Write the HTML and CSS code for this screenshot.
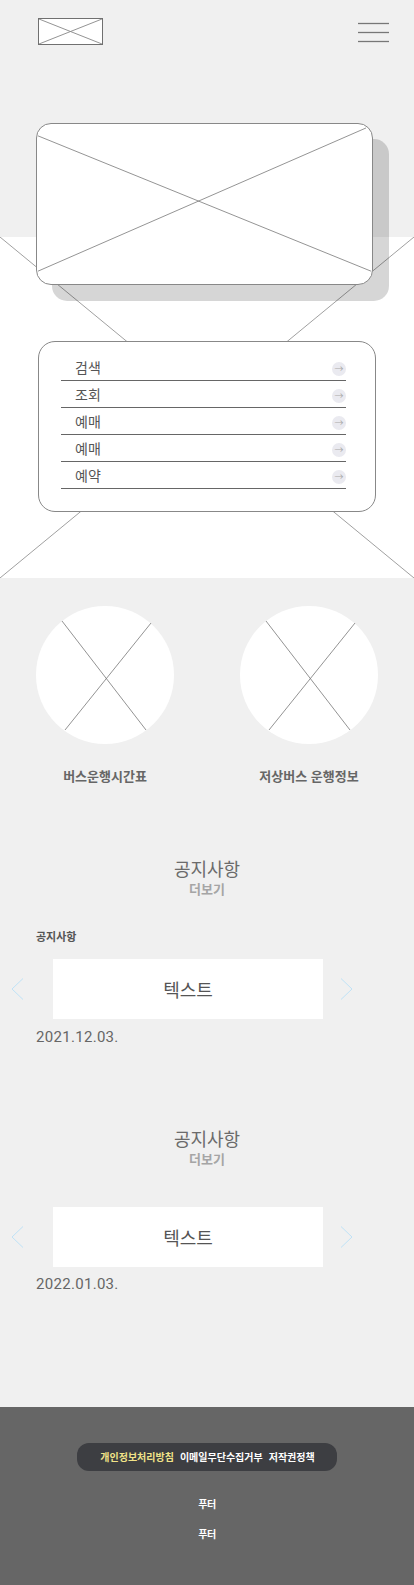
FILE: index.html
```html
<!DOCTYPE html>
<html lang="ko">

<head>
    <meta charset="utf-8">
    <meta name="viewport" content="width=device-width, initial-scale=1.0">
    <title>버스 예매</title>
    <link rel="stylesheet" href="styles.css">
</head>

<body>

    <header>
        <a class="logo" href="#">
            <svg viewBox="0 0 66 28" preserveAspectRatio="none">
                <line x1="0" y1="0" x2="66" y2="28" />
                <line x1="66" y1="0" x2="0" y2="28" />
            </svg>
        </a>
        <button class="menu-btn" aria-label="메뉴">
            <svg width="31" height="28" viewBox="0 0 31 28">
                <line x1="0" y1="5.5" x2="31" y2="5.5" />
                <line x1="0" y1="14.5" x2="31" y2="14.5" />
                <line x1="0" y1="23.5" x2="31" y2="23.5" />
            </svg>
        </button>
    </header>

    <section class="visual">
        <svg class="visual-x" viewBox="0 0 414 341" preserveAspectRatio="none">
            <line x1="0" y1="0" x2="414" y2="341" />
            <line x1="414" y1="0" x2="0" y2="341" />
        </svg>

        <div class="hero">
            <svg viewBox="0 0 337 162" preserveAspectRatio="none">
                <line x1="1" y1="12" x2="336" y2="149" />
                <line x1="331" y1="4" x2="1" y2="149" />
            </svg>
        </div>

        <nav class="quick-menu">
            <a href="#" class="row">검색<span class="go"></span></a>
            <a href="#" class="row">조회<span class="go"></span></a>
            <a href="#" class="row">예매<span class="go"></span></a>
            <a href="#" class="row">예매<span class="go"></span></a>
            <a href="#" class="row">예약<span class="go"></span></a>
        </nav>
    </section>

    <section class="links">
        <a href="#" class="link">
            <span class="circle">
                <svg viewBox="0 0 138 138">
                    <line x1="26" y1="15" x2="110" y2="124" />
                    <line x1="115" y1="17" x2="29" y2="124" />
                </svg>
            </span>
            <span class="link-name">버스운행시간표</span>
        </a>
        <a href="#" class="link">
            <span class="circle">
                <svg viewBox="0 0 138 138">
                    <line x1="26" y1="15" x2="110" y2="124" />
                    <line x1="115" y1="17" x2="29" y2="124" />
                </svg>
            </span>
            <span class="link-name">저상버스 운행정보</span>
        </a>
    </section>

    <section class="notice first">
        <h2>공지사항</h2>
        <a href="#" class="more">더보기</a>
        <p class="notice-label">공지사항</p>
        <div class="slider">
            <button class="arrow prev" aria-label="이전">
                <svg width="13" height="22" viewBox="0 0 13 22"><polyline points="12,0.5 1,11 12,21.5" /></svg>
            </button>
            <div class="slide">텍스트</div>
            <button class="arrow next" aria-label="다음">
                <svg width="13" height="22" viewBox="0 0 13 22"><polyline points="1,0.5 12,11 1,21.5" /></svg>
            </button>
        </div>
        <p class="date">2021.12.03.</p>
    </section>

    <section class="notice second">
        <h2>공지사항</h2>
        <a href="#" class="more">더보기</a>
        <div class="slider">
            <button class="arrow prev" aria-label="이전">
                <svg width="13" height="22" viewBox="0 0 13 22"><polyline points="12,0.5 1,11 12,21.5" /></svg>
            </button>
            <div class="slide">텍스트</div>
            <button class="arrow next" aria-label="다음">
                <svg width="13" height="22" viewBox="0 0 13 22"><polyline points="1,0.5 12,11 1,21.5" /></svg>
            </button>
        </div>
        <p class="date">2022.01.03.</p>
    </section>

    <footer>
        <div class="policy">
            <a href="#" class="privacy">개인정보처리방침</a>
            <a href="#">이메일무단수집거부</a>
            <a href="#">저작권정책</a>
        </div>
        <p>푸터</p>
        <p>푸터</p>
    </footer>

</body></html>
```

FILE: styles.css
```css
body {
    margin: 0;
    background-color: #f0f0f0;
    font-family: "Noto Sans CJK KR", "Noto Sans", sans-serif;
    color: #555;
}

a {
    text-decoration: none;
    color: inherit;
}

button {
    border: none;
    background: none;
    padding: 0;
}

header {
    display: flex;
    justify-content: space-between;
    align-items: flex-start;
    padding: 18px 25px 0 38px;
    height: 28px;
}

.logo {
    display: block;
    width: 63px;
    height: 25px;
    background-color: #fff;
    border: 1.5px solid #707070;
}

.logo svg {
    display: block;
    width: 100%;
    height: 100%;
    stroke: #8a8a8a;
    stroke-width: 1;
}

.menu-btn svg {
    display: block;
    stroke: #777;
    stroke-width: 1.3;
}

/* main visual */
.visual {
    position: relative;
    margin-top: 191px;
    height: 341px;
    background-color: #fff;
}

.visual-x {
    position: absolute;
    top: 0;
    left: 0;
    width: 100%;
    height: 100%;
    stroke: #777;
    stroke-width: 0.7;
}

.hero {
    position: relative;
    top: -114px;
    margin: 0 41px 0 36px;
    height: 160px;
    background-color: #fff;
    border: 1px solid #888;
    border-radius: 15px;
    box-shadow: 16px 16px 0 rgba(0, 0, 0, .16);
}

.hero svg {
    display: block;
    width: 100%;
    height: 100%;
    stroke: #777;
    stroke-width: 0.8;
}

.quick-menu {
    position: relative;
    margin: -58px 38px 0 38px;
    padding: 12px 29px 22px 22px;
    background-color: #fff;
    border: 1px solid #888;
    border-radius: 17px;
}

.row {
    display: flex;
    justify-content: space-between;
    align-items: center;
    height: 26px;
    padding-left: 14px;
    border-bottom: 1px solid #666;
    font-size: 14px;
    line-height: 26px;
    color: #555;
}

.go {
    position: relative;
    width: 14px;
    height: 14px;
    margin-top: 4px;
    border-radius: 50%;
    background-color: #eaeaf0;
}

.go::after {
    content: "→";
    position: absolute;
    top: 0;
    left: 0;
    width: 14px;
    line-height: 13px;
    text-align: center;
    font-size: 9px;
    color: #aaa;
}

/* links */
.links {
    display: grid;
    grid-template-columns: repeat(2, 1fr);
    padding: 28px 3px 0;
}

.link {
    display: flex;
    flex-direction: column;
    align-items: center;
}

.circle {
    display: block;
    width: 138px;
    height: 138px;
    border-radius: 50%;
    background-color: #fff;
}

.circle svg {
    display: block;
    stroke: #777;
    stroke-width: 0.8;
}

.link-name {
    margin-top: 22px;
    font-size: 13px;
    line-height: 20px;
    font-weight: 700;
    color: #666;
}

/* notice */
.notice {
    text-align: center;
}

.notice.first {
    margin-top: 70px;
}

.notice.second {
    margin-top: 79px;
}

.notice h2 {
    margin: 0;
    font-size: 18px;
    line-height: 24px;
    font-weight: 400;
    color: #6b6b6b;
}

.more {
    display: block;
    font-size: 13px;
    line-height: 18px;
    font-weight: 700;
    color: #a5a5a5;
}

.notice-label {
    margin: 30px 0 0 36px;
    text-align: left;
    font-size: 11px;
    line-height: 16px;
    font-weight: 700;
    color: #555;
}

.slider {
    display: flex;
    align-items: center;
    margin-top: 15px;
    padding-left: 11px;
}

.second .slider {
    margin-top: 39px;
}

.arrow svg {
    display: block;
    fill: none;
    stroke: #bfe2f6;
    stroke-width: 1;
}

.slide {
    width: 270px;
    height: 60px;
    margin: 0 17px 0 29px;
    background-color: #fff;
    font-size: 18px;
    line-height: 60px;
    color: #555;
}

.date {
    margin: 8px 0 0 36px;
    text-align: left;
    font-family: "Roboto", sans-serif;
    font-size: 15px;
    line-height: 20px;
    letter-spacing: 0.3px;
    color: #666;
}

.second .date {
    margin-top: 7px;
}

/* footer */
footer {
    box-sizing: border-box;
    height: 178px;
    margin-top: 113px;
    padding-top: 35px;
    background-color: #666;
    text-align: center;
    color: #fff;
}

.policy {
    display: inline-flex;
    align-items: center;
    gap: 6px;
    height: 28px;
    padding: 0 22px 0 23px;
    border-radius: 12px;
    background-color: #3d3e42;
    font-size: 10px;
    font-weight: 700;
}

.policy .privacy {
    color: #f1e388;
}

footer p {
    margin: 25px 0 0;
    font-size: 10px;
    line-height: 16px;
    font-weight: 700;
    letter-spacing: -0.5px;
}

footer p + p {
    margin-top: 14px;
}
```
